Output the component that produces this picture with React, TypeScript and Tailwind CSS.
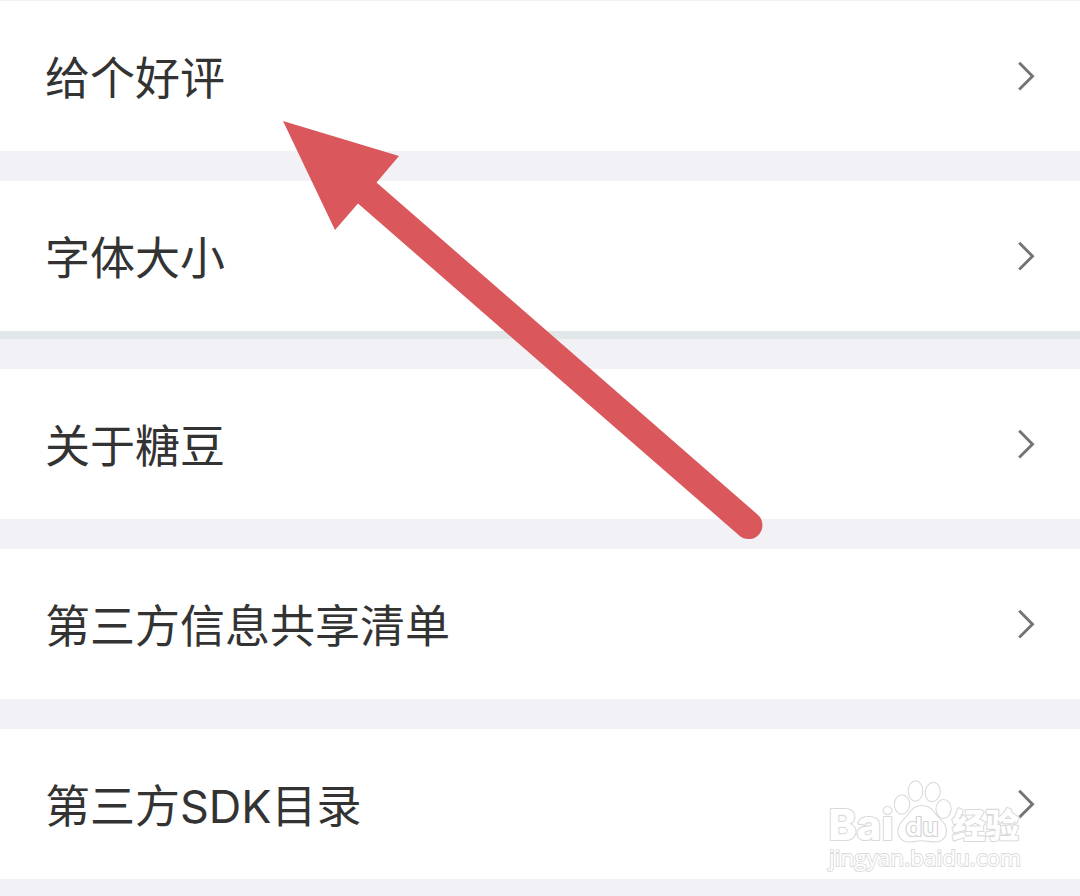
const sections = [
  { label: "给个好评", gap: "h-[30px]" },
  { label: "字体大小", gap: "h-[38px] border-t-8 border-[#e1e7e8]" },
  { label: "关于糖豆", gap: "h-[30px]" },
  { label: "第三方信息共享清单", gap: "h-[30px]" },
  { label: "第三方SDK目录", gap: "h-[17px]" },
];

function Chevron() {
  return (
    <svg width="20" height="30" viewBox="0 0 20 30" fill="none" className="shrink-0">
      <path d="M3.2 1.8 16.500 15.200 3.2 28.600" stroke="#747474" strokeWidth="2.9" />
    </svg>
  );
}

function Row({ label }: { label: string }) {
  return (
    <button className="flex h-[150px] w-full items-center justify-between bg-white pl-[45px] pr-[44px] text-left">
      <span className="whitespace-nowrap pt-[5px] text-[45px] leading-[60px] text-[#333333]">{label}</span>
      <Chevron />
    </button>
  );
}

function PointerArrow() {
  return (
    <svg width="490" height="430" viewBox="280 115 490 430" className="pointer-events-none absolute left-[280px] top-[115px]">
      <path d="M283 121 399 156 376.500 182.500 757.500 514.500A13.800 13.800 0 0 1 739.500 535.800L358 203.500 335 230Z" fill="#da575b" />
    </svg>
  );
}

function Watermark() {
  return (
    <svg
      width="210"
      height="110"
      viewBox="820 770 210 110"
      fill="#ffffff"
      stroke="#dadada"
      className="pointer-events-none absolute left-[820px] top-[770px]"
    >
      <g strokeWidth="1.1">
        <ellipse cx="902" cy="804.500" rx="7.700" ry="9.700" />
        <ellipse cx="915.500" cy="791" rx="7.300" ry="10.200" />
        <ellipse cx="932.700" cy="792" rx="7.500" ry="9.700" transform="rotate(12 932.7 792)" />
        <ellipse cx="943.500" cy="809" rx="7.600" ry="9.500" />
        <path d="M922 805.500c6 0 10 3 12.500 7 4 6.500 12 9.500 12 18.500 0 7-5 11-11.500 11-5 0-8-1.200-13-1.200s-8 1.200-13 1.200c-6.500 0-11-4-11-11 0-9 7.500-12 11.500-18.500 2.500-4 6.500-7 12.500-7Z" />
      </g>
      <g paintOrder="stroke" strokeLinejoin="round" strokeWidth="2.200">
        <text x="828.500" y="840" fontSize="42" fontWeight="800" textLength="65" lengthAdjust="spacingAndGlyphs" fontFamily="Inter, sans-serif">
          Bai
        </text>
        <text x="905.500" y="835.500" fontSize="25" fontWeight="600" stroke="#d2d2d2" textLength="33" lengthAdjust="spacingAndGlyphs" fontFamily="Inter, sans-serif">
          du
        </text>
        <text x="952" y="838" fontSize="34" fontWeight="900" textLength="67" lengthAdjust="spacingAndGlyphs" fontFamily="Noto Sans CJK SC, sans-serif">
          经验
        </text>
      </g>
      <text
        x="829"
        y="866"
        fontSize="22"
        textLength="192"
        lengthAdjust="spacingAndGlyphs"
        fontFamily="Open Sans, sans-serif"
        fontWeight="500"
        paintOrder="stroke"
        strokeWidth="1.800"
      >
        jingyan.baidu.com
      </text>
    </svg>
  );
}

export default function App() {
  return (
    <div className="relative h-[896px] w-[1080px] overflow-hidden border-t border-[#f1f1f4] bg-[#f2f1f6] font-['Inter','Noto_Sans_CJK_SC',sans-serif]">
      {sections.map((section) => (
        <div key={section.label}>
          <Row label={section.label} />
          <div className={section.gap} />
        </div>
      ))}
      <div className="absolute inset-x-0 -top-px">
        <PointerArrow />
        <Watermark />
      </div>
    </div>
  );
}
